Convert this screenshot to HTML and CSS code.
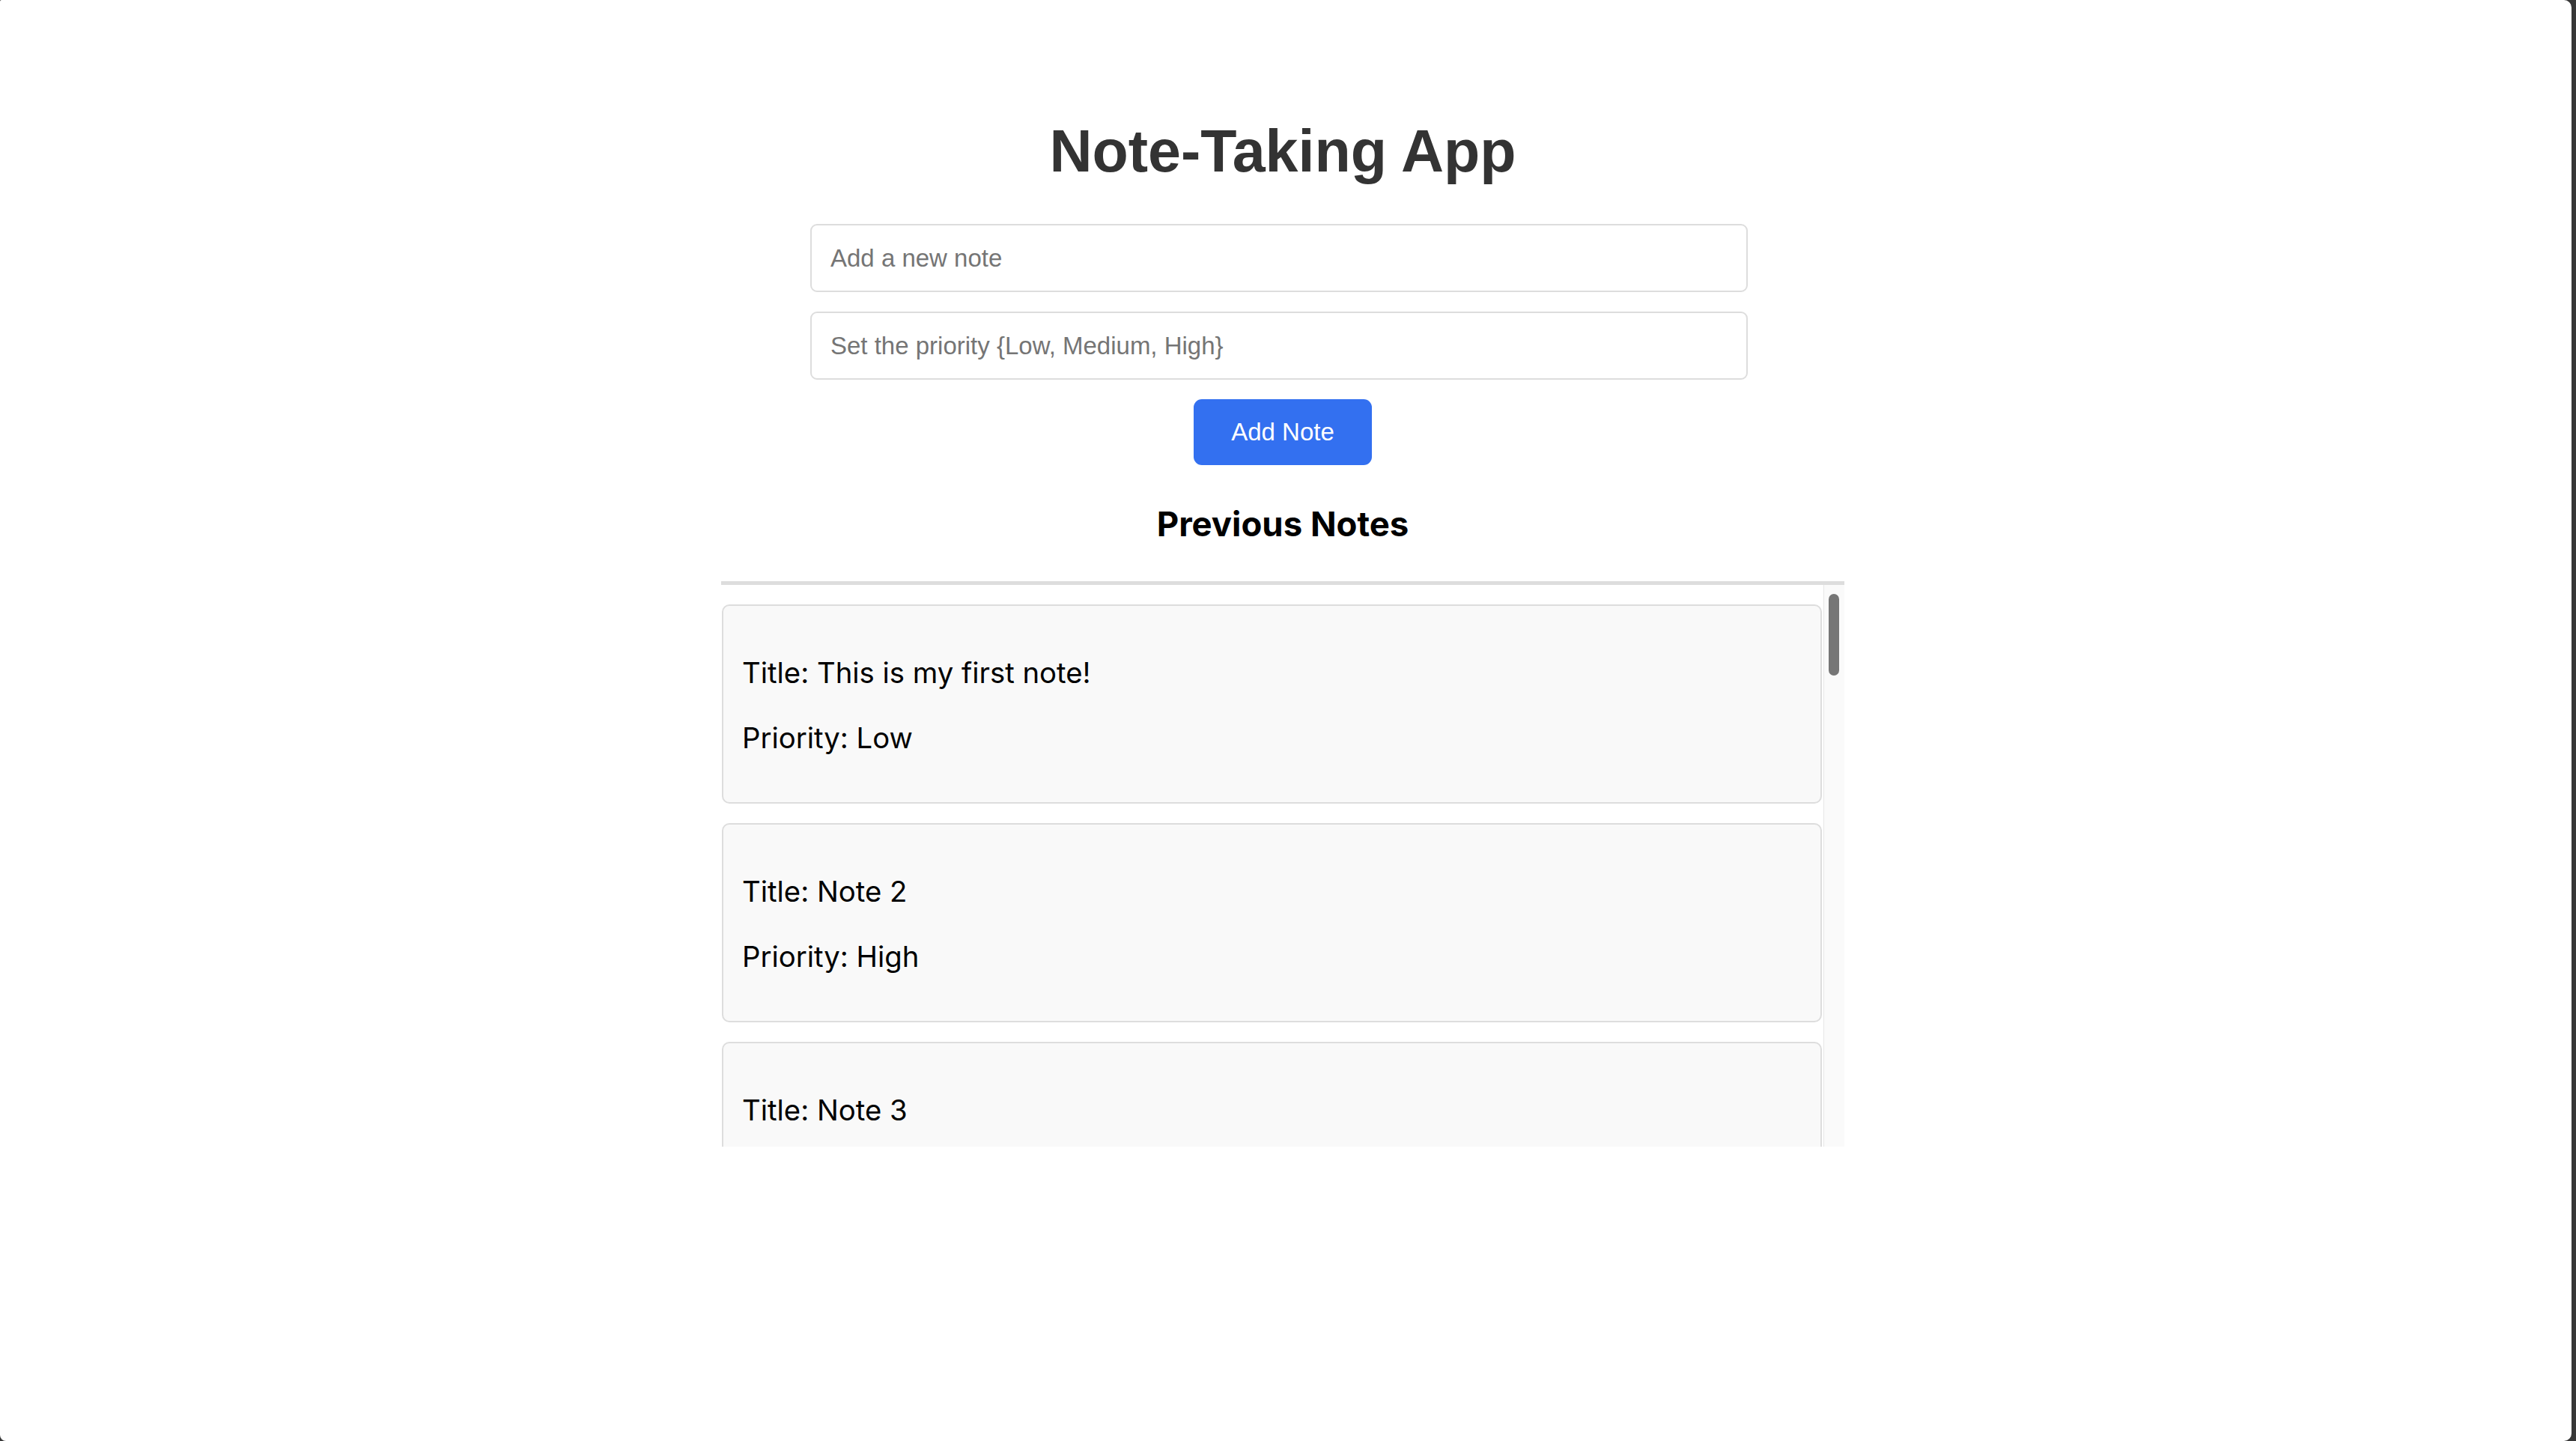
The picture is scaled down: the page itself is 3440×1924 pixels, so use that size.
FILE: index.html
```html
<!DOCTYPE html>
<html lang="en">
<head>
<meta charset="utf-8">
<title>Note-Taking App</title>
<link rel="stylesheet" href="styles.css">
</head>
<body>
<div class="window">
  <main class="app">
    <h1 class="app-title">Note-Taking App</h1>
    <form class="note-form">
      <input class="field" type="text" placeholder="Add a new note">
      <input class="field" type="text" placeholder="Set the priority {Low, Medium, High}">
      <button class="add-btn" type="button">Add Note</button>
    </form>
    <h2 class="section-title">Previous Notes</h2>
    <div class="notes-frame">
      <div class="notes-list">
        <div class="note"><p>Title: This is my first note!</p><p>Priority: Low</p></div>
        <div class="note"><p>Title: Note 2</p><p>Priority: High</p></div>
        <div class="note"><p>Title: Note 3</p></div>
      </div>
      <div class="scroll-track"><div class="scroll-thumb"></div></div>
    </div>
  </main>
</div>
</body>
</html>
```

FILE: styles.css
```css
html {
  background: #383838;
}

body {
  margin: 0;
  height: 100vh;
  overflow: hidden;
}

.window {
  box-sizing: border-box;
  width: calc(100% - 6px);
  height: 100vh;
  background: #ffffff;
  border-radius: 2px 10px 10px 8px;
  padding-top: 157px;
  font-family: "Liberation Sans", Arial, sans-serif;
}

.app {
  width: 1500px;
  margin-left: 963px;
  display: flex;
  flex-direction: column;
}

.app-title {
  margin: 0;
  font-size: 79px;
  font-weight: 700;
  color: #333333;
  text-align: center;
  line-height: 90px;
}

.note-form {
  margin-top: 52px;
  display: flex;
  flex-direction: column;
  gap: 26px;
}

.field {
  box-sizing: border-box;
  width: 1252px;
  height: 91px;
  margin-left: 119px;
  padding: 0 25px;
  border: 2px solid #dddddd;
  border-radius: 9px;
  font-family: "Liberation Sans", Arial, sans-serif;
  font-size: 33px;
  color: #222222;
  background: #ffffff;
  outline: none;
}

.field::placeholder {
  color: #757575;
}

.add-btn {
  align-self: center;
  box-sizing: border-box;
  width: 238px;
  height: 88px;
  border: none;
  border-radius: 11px;
  background: #3370f0;
  color: #ffffff;
  font-family: "Liberation Sans", Arial, sans-serif;
  font-size: 33px;
  padding: 0;
}

.section-title {
  margin: 51px 0 0;
  font-family: Inter, "Noto Sans", sans-serif;
  font-size: 45.5px;
  font-weight: 700;
  color: #000000;
  text-align: center;
  line-height: 55px;
}

.notes-frame {
  box-sizing: border-box;
  margin-top: 49px;
  height: 755px;
  border-top: 5px solid #dddddd;
  display: flex;
}

.notes-list {
  flex: 1;
  overflow: hidden;
  font-family: Inter, "Noto Sans", sans-serif;
}

.scroll-track {
  box-sizing: border-box;
  width: 28px;
  background: #fafafa;
  border-left: 1px solid #e6e6e6;
  padding: 12px 7px 0 6px;
}

.scroll-thumb {
  height: 109px;
  border-radius: 7px;
  background: #767676;
}

.note {
  margin: 26px 2px 0 1px;
  padding: 26px 25px 22px;
  border: 2px solid #dddddd;
  border-radius: 10px;
  background: #f9f9f9;
  color: #000000;
  font-size: 38.3px;
}

.note p {
  margin: 39.5px 0;
  line-height: 47.8px;
}
```
